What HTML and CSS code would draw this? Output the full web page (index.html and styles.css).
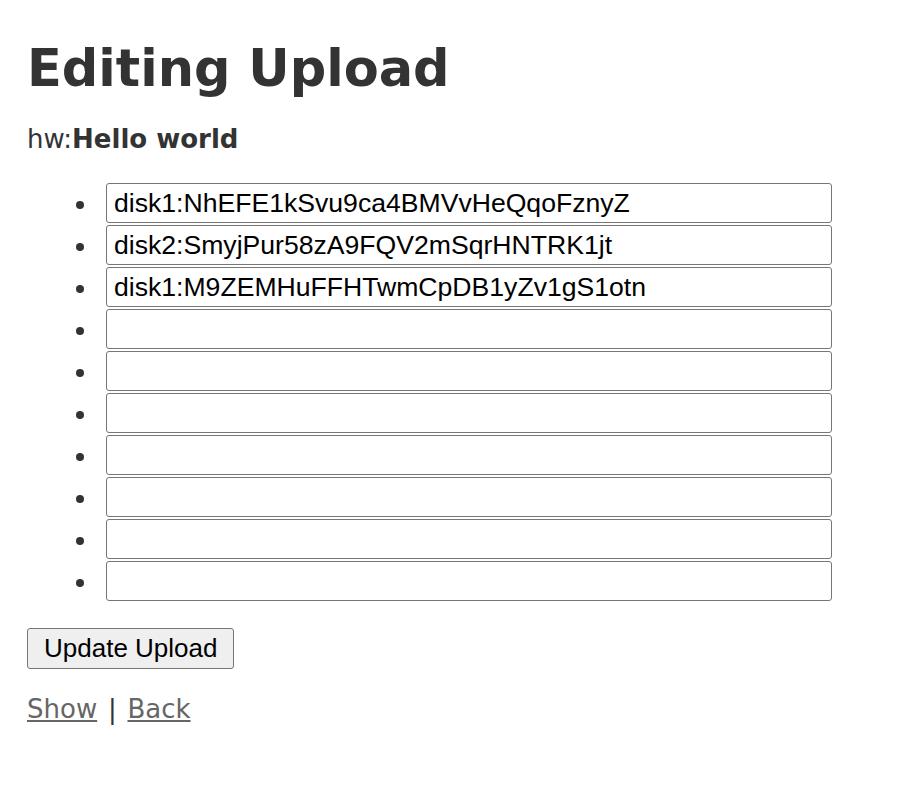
FILE: index.html
```html
<!DOCTYPE html>
<html>
<head>
<meta charset="utf-8">
<link rel="stylesheet" href="styles.css">
</head>
<body>
<h1 class="title">Editing Upload</h1>
<p class="field">hw:<strong>Hello world</strong></p>
<form class="form">
<ul class="disks">
<li><input class="disk" type="text" value="disk1:NhEFE1kSvu9ca4BMVvHeQqoFznyZ"></li>
<li><input class="disk" type="text" value="disk2:SmyjPur58zA9FQV2mSqrHNTRK1jt"></li>
<li><input class="disk" type="text" value="disk1:M9ZEMHuFFHTwmCpDB1yZv1gS1otn"></li>
<li><input class="disk" type="text" value=""></li>
<li><input class="disk" type="text" value=""></li>
<li><input class="disk" type="text" value=""></li>
<li><input class="disk" type="text" value=""></li>
<li><input class="disk" type="text" value=""></li>
<li><input class="disk" type="text" value=""></li>
<li><input class="disk" type="text" value=""></li>
</ul>
<button class="submit" type="button">Update Upload</button>
</form>
<p class="links"><a href="#">Show</a> | <a href="#">Back</a></p>
</body>
</html>
```
FILE: styles.css
```css
body {
  margin: 0;
  padding: 0 27px;
  font-family: "DejaVu Sans", Verdana, sans-serif;
  font-size: 26px;
  color: #333;
  background: #fff;
}
.title {
  font-size: 51px;
  margin: 38px 0 25px;
  line-height: 61px;
}
.field {
  margin: 0 0 28px;
  line-height: 30px;
}
.form {
  margin: 0;
}
.disks {
  list-style: none;
  margin: 0 0 26px;
  padding: 0;
}
.disks li {
  display: flex;
  align-items: center;
  height: 42px;
}
.disks li::before {
  content: "";
  width: 8px;
  height: 8px;
  border-radius: 50%;
  background: #333;
  margin: 4px 22px 0 49px;
  flex: none;
}
.disk {
  box-sizing: border-box;
  width: 726px;
  height: 40px;
  font-family: "Liberation Sans", Arial, sans-serif;
  font-size: 26.6px;
  color: #000;
  padding: 0 7px;
  border: 1px solid #767676;
  border-radius: 3px;
  margin: 0;
}
.submit {
  font-family: "Liberation Sans", Arial, sans-serif;
  font-size: 26px;
  height: 41px;
  padding: 0 16px;
  background: #efefef;
  border: 1px solid #767676;
  border-radius: 3px;
  color: #000;
}
.links {
  margin: 25px 0;
  line-height: 30px;
  word-spacing: 2.5px;
}
.links a {
  color: #666;
}
```
